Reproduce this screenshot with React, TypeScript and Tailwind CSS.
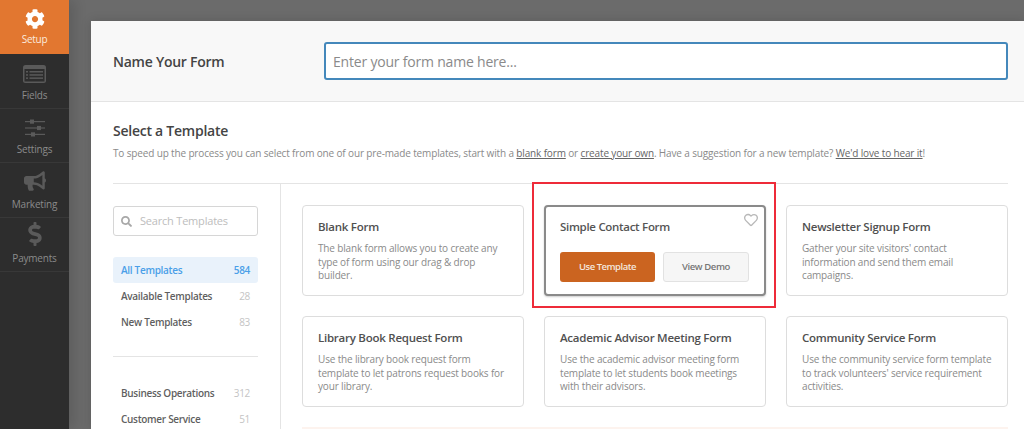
import { FaCog, FaBullhorn, FaDollarSign, FaRegHeart, FaSearch } from "react-icons/fa";

const font = { fontFamily: '"Open Sans", "Noto Sans", sans-serif' };

const FieldsIcon = () => (
  <svg width="23" height="18" viewBox="0 0 23 18">
    <rect x="0" y="0" width="23" height="18" rx="2.5" fill="#5a5a5a" />
    <rect x="1.5" y="4" width="20" height="12.5" fill="#2d2d2d" />
    <rect x="3" y="6" width="2" height="1.5" fill="#5a5a5a" />
    <rect x="3" y="9.2" width="2" height="1.5" fill="#5a5a5a" />
    <rect x="3" y="12.4" width="2" height="1.5" fill="#5a5a5a" />
    <rect x="6.5" y="6" width="13.5" height="1.5" fill="#5a5a5a" />
    <rect x="6.5" y="9.2" width="13.5" height="1.5" fill="#5a5a5a" />
    <rect x="6.5" y="12.4" width="13.5" height="1.5" fill="#5a5a5a" />
  </svg>
);

const SlidersIcon = () => (
  <svg width="20" height="18" viewBox="0 0 20 18">
    <rect x="0" y="2" width="20" height="1.2" fill="#5a5a5a" />
    <rect x="0" y="8.4" width="20" height="1.2" fill="#5a5a5a" />
    <rect x="0" y="14.8" width="20" height="1.2" fill="#5a5a5a" />
    <rect x="5" y="0.5" width="4" height="4.2" fill="#5a5a5a" />
    <rect x="12" y="6.9" width="4" height="4.2" fill="#5a5a5a" />
    <rect x="6" y="13.3" width="4" height="4.2" fill="#5a5a5a" />
  </svg>
);

const navItems = [
  { label: "Fields", icon: <FieldsIcon /> },
  { label: "Settings", icon: <SlidersIcon /> },
  { label: "Marketing", icon: <FaBullhorn size={22} color="#5a5a5a" /> },
  { label: "Payments", icon: <FaDollarSign size={24} color="#5a5a5a" /> },
];

const categories = [
  { name: "All Templates", count: 584, active: true },
  { name: "Available Templates", count: 28 },
  { name: "New Templates", count: 83 },
];

const categories2 = [
  { name: "Business Operations", count: 312 },
  { name: "Customer Service", count: 51 },
];

const templates = [
  {
    title: "Blank Form",
    lines: ["The blank form allows you to create any", "type of form using our drag & drop", "builder."],
  },
  { title: "Simple Contact Form", lines: [], highlighted: true },
  {
    title: "Newsletter Signup Form",
    lines: ["Gather your site visitors' contact", "information and send them email", "campaigns."],
  },
  {
    title: "Library Book Request Form",
    lines: ["Use the library book request form", "template to let patrons request books for", "your library."],
  },
  {
    title: "Academic Advisor Meeting Form",
    lines: ["Use the academic advisor meeting form", "template to let students book meetings", "with their advisors."],
  },
  {
    title: "Community Service Form",
    lines: ["Use the community service form template", "to track volunteers' service requirement", "activities."],
  },
];

const Category = ({ name, count, active }: { name: string; count: number; active?: boolean }) => (
  <div
    className={
      active
        ? "flex h-[26px] items-center justify-between rounded-[3px] bg-[#e9f2fb] px-[8px] text-[10px] font-semibold tracking-[-0.3px] text-[#4a9fe8]"
        : "flex h-[26px] items-center justify-between px-[8px] text-[10px] font-semibold tracking-[-0.3px] text-[#5f5f5f]"
    }
  >
    <span>{name}</span>
    <span className={active ? "" : "font-normal text-[#c4c4c4]"}>{count}</span>
  </div>
);

const Card = ({ title, lines, highlighted }: { title: string; lines: string[]; highlighted?: boolean }) => {
  if (highlighted) {
    return (
      <div className="relative h-[91px] rounded-[4px] border-2 border-[#8a8a8a] bg-white pl-[14px] pr-[15px] pt-[11px] shadow-[0_1px_2px_rgba(0,0,0,0.2)]">
        <div className="text-[11.5px] leading-[18px] font-semibold tracking-[-0.3px] text-[#555555]">{title}</div>
        <FaRegHeart size={14} color="#b8b8b8" className="absolute right-[0px] top-[0px] mr-[6px] mt-[6px]" />
        <div className="mt-[16px] flex gap-[8px]">
          <div className="flex h-[30px] w-[96px] items-center justify-center rounded-[3px] bg-[#cb6420] text-[9.5px] font-semibold tracking-[-0.5px] text-[#f4e6dc]">
            Use Template
          </div>
          <div className="flex h-[30px] w-[87px] items-center justify-center rounded-[3px] border border-[#e2e2e2] bg-[#f6f6f6] text-[9.5px] font-semibold tracking-[-0.4px] text-[#777777]">
            View Demo
          </div>
        </div>
      </div>
    );
  }
  return (
    <div className="h-[91px] rounded-[4px] border border-[#dddddd] bg-white pl-[15px] pr-[8px] pt-[12px]">
      <div className="text-[11.5px] leading-[18px] font-semibold tracking-[-0.25px] text-[#505050]">{title}</div>
      <div className="mt-[6px] text-[10px] leading-[13.5px] tracking-[-0.16px] text-[#8a8a8a]">
        {lines.map((l) => (
          <div key={l} className="whitespace-nowrap">
            {l}
          </div>
        ))}
      </div>
    </div>
  );
};

export default function App() {
  return (
    <div style={font} className="relative flex h-[429px] w-[1024px] overflow-hidden bg-[#6b6b6b]">
      <aside className="flex w-[69px] shrink-0 flex-col bg-[#2d2d2d] shadow-[6px_0_12px_rgba(0,0,0,0.12)]">
        <div className="flex h-[54px] flex-col items-center bg-[#e27730] pt-[9px]">
          <FaCog size={20} color="#ffffff" />
          <span className="mt-[3px] text-[10px] leading-[14px] tracking-[-0.25px] text-[#fbeade]">Setup</span>
        </div>
        {navItems.map((item) => (
          <div
            key={item.label}
            className="flex h-[54.5px] flex-col items-center justify-end border-b border-[#383838] pb-[6px]"
          >
            {item.icon}
            <span className="mt-[5px] text-[10px] leading-[14px] tracking-[-0.2px] text-[#8b8b8b]">{item.label}</span>
          </div>
        ))}
      </aside>

      <main className="ml-[22px] mt-[21px] flex-1 bg-white shadow-[0_0_10px_rgba(0,0,0,0.15)]">
        <header className="flex h-[81px] items-center border-b border-[#e4e4e4] bg-[#f8f8f8] pl-[22px] pr-[16px]">
          <h1 className="w-[211px] shrink-0 text-[14px] font-semibold tracking-[-0.25px] text-[#444444]">
            Name Your Form
          </h1>
          <div className="flex h-[38px] flex-1 items-center rounded-[3px] border-2 border-[#4488bb] bg-white pl-[7px] text-[14px] tracking-[-0.2px] text-[#8a8a8a]">
            Enter your form name here...
          </div>
        </header>

        <div className="px-[22px] pr-[16px]">
          <h2 className="mt-[19px] text-[14px] leading-[20px] font-semibold tracking-[-0.25px] text-[#444444]">
            Select a Template
          </h2>
          <p className="mt-[2px] whitespace-nowrap text-[10px] leading-[20px] tracking-[-0.145px] text-[#8a8a8a]">
            To speed up the process you can select from one of our pre-made templates, start with a{" "}
            <span className="text-[#666666] underline">blank form</span> or{" "}
            <span className="text-[#666666] underline">create your own</span>. Have a suggestion for a new template?{" "}
            <span className="text-[#666666] underline">We'd love to hear it</span>!
          </p>

          <div className="mt-[20px] flex border-t border-[#e4e4e4]">
            <div className="w-[168px] shrink-0 border-r border-[#e4e4e4] pr-[22px] pt-[22px]">
              <div className="flex h-[30px] items-center rounded-[3px] border border-[#d6d6d6] bg-white pl-[7px] text-[11px] tracking-[-0.2px] text-[#bdbdbd]">
                <FaSearch size={11} color="#a8a8a8" className="mr-[8px]" />
                Search Templates
              </div>
              <div className="mt-[21px]">
                {categories.map((c) => (
                  <Category key={c.name} {...c} />
                ))}
              </div>
              <div className="mt-[21px] border-t border-[#e4e4e4] pt-[23px]">
                {categories2.map((c) => (
                  <Category key={c.name} {...c} />
                ))}
              </div>
            </div>

            <div className="flex-1 pl-[21px] pt-[21px]">
              <div className="grid grid-cols-3 gap-x-[20px] gap-y-[20px]">
                {templates.map((t) => (
                  <Card key={t.title} {...t} />
                ))}
              </div>
              <div className="mt-[20px] h-[4px] bg-[#fdf3ee]" />
            </div>
          </div>
        </div>
      </main>

      {/* recuadro rojo de la captura */}
      <div className="absolute left-[532px] top-[182px] h-[126px] w-[244px] border-2 border-[#ee2b39]" />
    </div>
  );
}
